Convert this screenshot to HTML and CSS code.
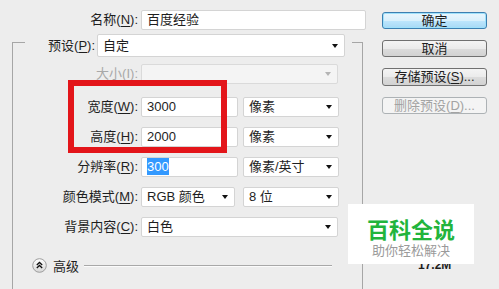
FILE: index.html
```html
<!DOCTYPE html>
<html lang="zh-CN">
<head>
<meta charset="UTF-8">
<meta name="viewport" content="width=device-width, initial-scale=1.0">
<title>新建</title>
<link rel="stylesheet" href="styles.css">
</head>
<body>

<div class="dialog">
    <div class="main">
        <div class="row name-row">
            <label class="lbl wide">名称(<u>N</u>):</label>
            <div class="field name-field">百度经验</div>
        </div>

        <div class="group">
            <div class="group-head">
                <label class="lbl head-lbl">预设(<u>P</u>):</label>
                <div class="field select preset">自定</div>
            </div>

            <div class="row size-row">
                <label class="lbl off">大小(<u>I</u>):</label>
                <div class="field select off size-field"></div>
            </div>
            <div class="row first-dim">
                <label class="lbl">宽度(<u>W</u>):</label>
                <div class="field num">3000</div>
                <div class="field select unit">像素</div>
            </div>
            <div class="row">
                <label class="lbl">高度(<u>H</u>):</label>
                <div class="field num">2000</div>
                <div class="field select unit">像素</div>
            </div>
            <div class="row">
                <label class="lbl">分辨率(<u>R</u>):</label>
                <div class="field num"><span class="picked">300</span></div>
                <div class="field select unit">像素/英寸</div>
            </div>
            <div class="row">
                <label class="lbl">颜色模式(<u>M</u>):</label>
                <div class="field select mode">RGB 颜色</div>
                <div class="field select unit bits">8 位</div>
            </div>
            <div class="row">
                <label class="lbl">背景内容(<u>C</u>):</label>
                <div class="field select bg-field">白色</div>
            </div>

            <div class="advanced">
                <svg class="toggle" width="15" height="15" viewBox="0 0 15 15">
                    <defs>
                        <linearGradient id="knob" x1="0" y1="0" x2="0" y2="1">
                            <stop offset="0" stop-color="#ffffff"/>
                            <stop offset="1" stop-color="#d6d6d6"/>
                        </linearGradient>
                    </defs>
                    <circle cx="7.5" cy="7.5" r="6.8" fill="url(#knob)" stroke="#9c9c9c"/>
                    <path d="M4.8 7 L7.5 4.5 L10.2 7 M4.8 10 L7.5 7.5 L10.2 10" fill="none" stroke="#111" stroke-width="1.3"/>
                </svg>
                <span class="adv-text">高级</span>
                <span class="adv-line"></span>
            </div>
        </div>
    </div>

    <div class="side">
        <button class="btn default">确定</button>
        <button class="btn">取消</button>
        <button class="btn">存储预设(<u>S</u>)...</button>
        <button class="btn" disabled>删除预设(<u>D</u>)...</button>
        <div class="info">
            <div>图像大小:</div>
            <div class="info-size">17.2M</div>
        </div>
    </div>
</div>

<!-- annotation + watermark laid over the dialog -->
<div class="mark-box"></div>
<div class="watermark">
    <div class="wm-title">百科全说</div>
    <div class="wm-sub">助你轻松解决</div>
</div>

</body>
</html>
```

FILE: styles.css
```css
html, body {
    margin: 0;
    padding: 0;
    width: 499px;
    height: 289px;
    overflow: hidden;
}
body {
    position: relative;
    background-color: #ededed;
    font-family: "Liberation Sans", "Noto Sans CJK SC", sans-serif;
    font-size: 13px;
    color: #1e1e1e;
}
u {
    text-decoration: underline;
    text-underline-offset: 2px;
}
.dialog {
    display: flex;
    height: 289px;
}
.main {
    width: 382px;
}
.row {
    display: flex;
    align-items: center;
    height: 20px;
    margin-top: 10px;
}
.lbl {
    box-sizing: border-box;
    width: 128px;
    padding-right: 3px;
    text-align: right;
    white-space: nowrap;
    line-height: 20px;
}
.lbl.wide {
    width: 141px;
}
.lbl.off {
    color: #a8a8a8;
}
.field {
    box-sizing: border-box;
    position: relative;
    height: 20px;
    line-height: 18px;
    padding-left: 5px;
    background-color: #fff;
    border: 1px solid #d4d4d4;
    border-radius: 2px;
    white-space: nowrap;
}
.select::after {
    content: "";
    position: absolute;
    right: 6px;
    top: 7px;
    border-left: 3.5px solid transparent;
    border-right: 3.5px solid transparent;
    border-top: 4px solid #111;
}
.field.off {
    background-color: #f4f4f4;
    border-color: #dadada;
}
.field.off::after {
    border-top-color: #b4b4b4;
}
.name-field {
    width: 225px;
}
.group {
    box-sizing: border-box;
    width: 351px;
    height: 247px;
    margin: 12px 0 0 12px;
    border: 1px solid #a6a6a6;
    border-bottom: none;
}
.group-head {
    display: flex;
    align-items: center;
    width: 327px;
    height: 23px;
    margin: -9px 0 0 12px;
    background-color: #ededed;
}
.head-lbl {
    width: 72px;
    padding-right: 2px;
}
.preset {
    width: 248px;
    height: 23px;
    line-height: 21px;
}
.preset::after {
    top: 9px;
}
.size-row {
    margin-top: 7px;
}
.size-field {
    width: 197px;
}
.first-dim {
    margin-top: 13px;
}
.num {
    width: 97px;
    margin-right: 5px;
}
.unit {
    width: 96px;
}
.mode {
    width: 94px;
    margin-right: 8px;
}
.bg-field {
    width: 197px;
}
.picked {
    background-color: #3399ff;
    color: #fff;
    padding: 1px 0;
}
.advanced {
    display: flex;
    align-items: center;
    margin: 21px 0 0 19px;
    height: 15px;
}
.adv-text {
    margin-left: 6px;
}
.adv-line {
    width: 248px;
    height: 0;
    margin-left: 5px;
    border-top: 1px solid #a8a8a8;
    border-bottom: 1px solid #fbfbfb;
}
.side {
    display: flex;
    flex-direction: column;
    width: 105px;
    padding-top: 12px;
}
.btn {
    box-sizing: border-box;
    height: 17px;
    margin-bottom: 11px;
    padding: 0;
    font-family: inherit;
    font-size: 13px;
    line-height: 14px;
    color: #1e1e1e;
    border: 1px solid #707070;
    border-radius: 3px;
    background: linear-gradient(#f4f4f4, #ebebeb 50%, #dcdcdc 51%, #d2d2d2);
}
.btn.default {
    border-color: #3c7fb1;
    background: linear-gradient(#eaf6fd, #d9f0fc 50%, #bee6fd 51%, #a7d9f5);
    box-shadow: inset 0 0 0 1px #9fe1fb;
}
.btn:nth-child(3) {
    height: 18px;
}
.btn[disabled] {
    color: #a3a3a3;
    border-color: #adb2b5;
    background: #f4f4f4;
}
.info {
    margin: 121px 0 0 36px;
    font-size: 12px;
    line-height: 13px;
}
.info-size {
    font-weight: bold;
}
.mark-box {
    position: absolute;
    left: 68px;
    top: 80px;
    width: 159px;
    height: 73px;
    box-sizing: border-box;
    border: 6px solid #e3151a;
}
.watermark {
    position: absolute;
    left: 348px;
    top: 204px;
    width: 126px;
    height: 60px;
    box-sizing: border-box;
    padding-top: 12px;
    background-color: #fff;
    text-align: center;
}
.wm-title {
    font-family: "Noto Sans CJK SC", sans-serif;
    font-size: 22px;
    font-weight: bold;
    line-height: 24px;
    color: #22b43c;
}
.wm-sub {
    margin-top: 3px;
    font-family: "Noto Sans CJK SC", sans-serif;
    font-size: 13px;
    line-height: 14px;
    color: #9a9a9a;
}
```
